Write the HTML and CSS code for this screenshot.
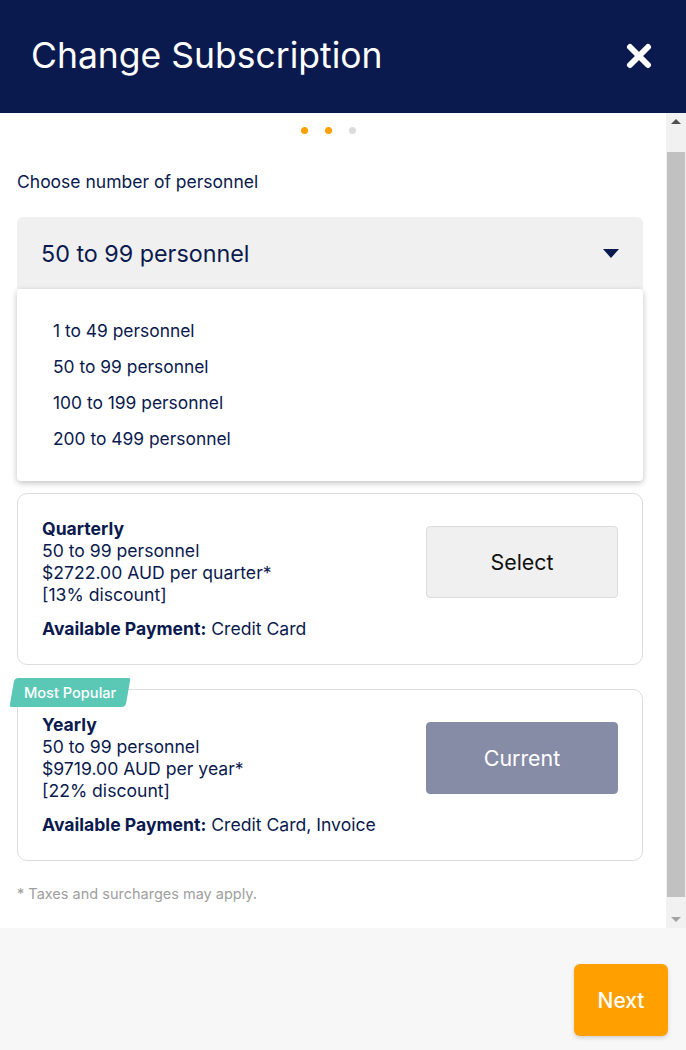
FILE: index.html
```html
<!DOCTYPE html>
<html lang="en">
    <head>
        <meta charset="UTF-8" />
        <title>Change Subscription</title>
        <link rel="stylesheet" href="styles.css">
    </head>
    <body>
        <div id="modal">
            <div id="header">
                <div class="title">Change Subscription</div>
                <svg class="close" width="26" height="26" viewBox="0 0 26 26">
                    <path d="M4 4 L22 22 M22 4 L4 22" stroke="#fff" stroke-width="6" stroke-linecap="round" />
                </svg>
            </div>
            <div id="body">
                <div id="content">
                    <div class="dots">
                        <span class="dot on"></span>
                        <span class="dot on"></span>
                        <span class="dot"></span>
                    </div>
                    <div class="label">Choose number of personnel</div>
                    <div class="select">
                        <span>50 to 99 personnel</span>
                        <svg width="16" height="9" viewBox="0 0 16 9"><path d="M0 0 L16 0 L8 9 Z" fill="#0b1a4e" /></svg>
                    </div>
                    <div class="menu">
                        <div class="option">1 to 49 personnel</div>
                        <div class="option">50 to 99 personnel</div>
                        <div class="option">100 to 199 personnel</div>
                        <div class="option">200 to 499 personnel</div>
                    </div>

                    <div class="plan">
                        <div class="info">
                            <b>Quarterly</b><br />
                            50 to 99 personnel<br />
                            $2722.00 AUD per quarter*<br />
                            [13% discount]
                            <div class="pay"><b>Available Payment:</b> Credit Card</div>
                        </div>
                        <button class="choose">Select</button>
                    </div>

                    <div class="plan">
                        <div class="badge"><span>Most Popular</span></div>
                        <div class="info">
                            <b>Yearly</b><br />
                            50 to 99 personnel<br />
                            $9719.00 AUD per year*<br />
                            [22% discount]
                            <div class="pay"><b>Available Payment:</b> Credit Card, Invoice</div>
                        </div>
                        <button class="choose current">Current</button>
                    </div>

                    <div class="note">* Taxes and surcharges may apply.</div>
                </div>
                <div class="scrollbar">
                    <div class="arrow up"></div>
                    <div class="track"><div class="thumb"></div></div>
                    <div class="arrow down"></div>
                </div>
            </div>
            <div id="footer">
                <button id="next">Next</button>
            </div>
        </div>
    </body>
</html>
```

FILE: styles.css
```css
body {
    margin: 0;
    font-family: Inter, "Open Sans", sans-serif;
    color: #0b1a4e;
    background-color: #fff;
}
#modal {
    width: 686px;
    height: 1050px;
    display: flex;
    flex-direction: column;
    overflow: hidden;
}
#header {
    height: 113px;
    flex: none;
    background-color: #0b1a4e;
    display: flex;
    align-items: center;
    justify-content: space-between;
    padding: 0 34px 0 31px;
    box-sizing: border-box;
}
#header .title {
    color: #fff;
    font-size: 35.5px;
    margin-top: -3px;
}
#header .close {
    margin-top: -2px;
}
#body {
    height: 815px;
    flex: none;
    display: flex;
}
#content {
    flex: 1;
    padding: 0 23px 0 17px;
    overflow: hidden;
}
.dots {
    display: flex;
    justify-content: center;
    gap: 17px;
    padding-top: 14px;
    margin-left: -3px;
}
.dot {
    width: 7px;
    height: 7px;
    border-radius: 50%;
    background-color: #dcdcdc;
}
.dot.on {
    background-color: #ffa000;
}
.label {
    font-size: 17.5px;
    line-height: 22px;
    margin-top: 37px;
}
.select {
    margin-top: 24px;
    height: 72px;
    background-color: #f0f0f0;
    border-radius: 6px 6px 0 0;
    display: flex;
    align-items: center;
    justify-content: space-between;
    padding: 0 24px;
    font-size: 23.3px;
}
.menu {
    background-color: #fff;
    border-radius: 4px;
    box-shadow: 0px 2px 6px rgba(0, 0, 0, 0.25);
    padding: 24px 36px;
    margin-bottom: 12px;
}
.option {
    font-size: 17.4px;
    line-height: 36px;
}
.plan {
    position: relative;
    border: 1px solid #dcdcdc;
    border-radius: 10px;
    padding: 24px;
    display: flex;
    justify-content: space-between;
    align-items: flex-start;
    margin-bottom: 24px;
    font-size: 17.6px;
    line-height: 22px;
}
.plan b {
    font-weight: 700;
}
.pay {
    margin-top: 12px;
}
button.choose {
    margin-top: 8px;
    width: 192px;
    height: 72px;
    border: 1px solid #dcdcdc;
    border-radius: 4px;
    background-color: #f0f0f0;
    font-family: inherit;
    font-size: 21.4px;
    color: #111;
}
button.current {
    background-color: #868ca6;
    border-color: #868ca6;
    color: #fff;
}
.badge {
    position: absolute;
    left: -6px;
    top: -12px;
    height: 29px;
    width: 116px;
    background-color: #5bc8b5;
    transform: skewX(-10deg);
    border-radius: 4px 2px 4px 2px;
    display: flex;
    align-items: center;
    justify-content: center;
}
.badge span {
    transform: skewX(10deg);
    color: #fff;
    font-size: 14.6px;
    font-weight: 500;
}
.note {
    font-size: 14.5px;
    color: #a0a0a0;
    margin-top: 18px;
}
.scrollbar {
    width: 20px;
    flex: none;
    background-color: #f1f1f1;
    display: flex;
    flex-direction: column;
}
.arrow {
    height: 17px;
    display: flex;
    align-items: center;
    justify-content: center;
}
.arrow.up::before {
    content: "";
    border: 5px solid transparent;
    border-bottom: 5px solid #505050;
    border-top: none;
}
.arrow.down::before {
    content: "";
    border: 5px solid transparent;
    border-top: 5px solid #a3a3a3;
    border-bottom: none;
}
.track {
    flex: 1;
    padding: 22px 1px 14px 1px;
    display: flex;
}
.thumb {
    flex: 1;
    background-color: #c1c1c1;
}
#footer {
    flex: 1;
    background-color: #f7f7f7;
    display: flex;
    justify-content: flex-end;
    align-items: flex-start;
    padding: 36px 18px 0 0;
}
button#next {
    width: 94px;
    height: 72px;
    border: none;
    border-radius: 6px;
    background-color: #ffa000;
    color: #fff;
    font-family: inherit;
    font-size: 21px;
    font-weight: 500;
    box-shadow: 0px 2px 4px rgba(0, 0, 0, 0.15);
}
```
